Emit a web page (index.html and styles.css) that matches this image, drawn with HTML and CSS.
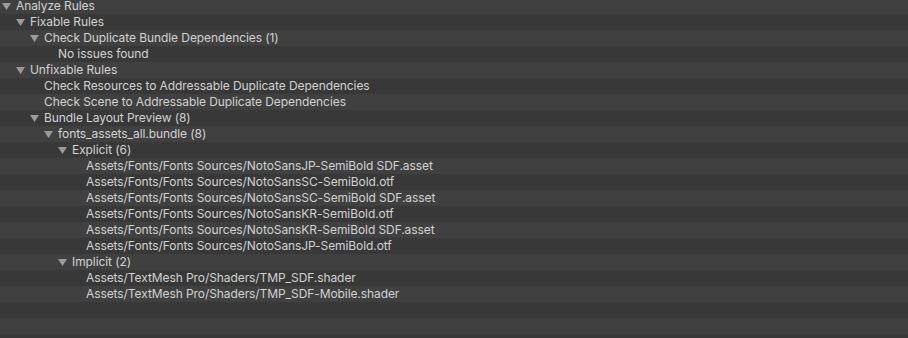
FILE: index.html
```html
<!DOCTYPE html>
<html>
<head>
    <title>Analyze Rules</title>
    <link rel="stylesheet" href="styles.css">
</head>
<body>
    <div class="tree">
        <div class="tree__row tree__row--first depth-0"><span class="tree__arrow"></span>Analyze Rules</div>
        <div class="tree__row depth-1"><span class="tree__arrow"></span>Fixable Rules</div>
        <div class="tree__row depth-2"><span class="tree__arrow"></span>Check Duplicate Bundle Dependencies (1)</div>
        <div class="tree__row depth-3">No issues found</div>
        <div class="tree__row depth-1"><span class="tree__arrow"></span>Unfixable Rules</div>
        <div class="tree__row depth-2">Check Resources to Addressable Duplicate Dependencies</div>
        <div class="tree__row depth-2">Check Scene to Addressable Duplicate Dependencies</div>
        <div class="tree__row depth-2"><span class="tree__arrow"></span>Bundle Layout Preview (8)</div>
        <div class="tree__row depth-3"><span class="tree__arrow"></span>fonts_assets_all.bundle (8)</div>
        <div class="tree__row depth-4"><span class="tree__arrow"></span>Explicit (6)</div>
        <div class="tree__row depth-5">Assets/Fonts/Fonts Sources/NotoSansJP-SemiBold SDF.asset</div>
        <div class="tree__row depth-5">Assets/Fonts/Fonts Sources/NotoSansSC-SemiBold.otf</div>
        <div class="tree__row depth-5">Assets/Fonts/Fonts Sources/NotoSansSC-SemiBold SDF.asset</div>
        <div class="tree__row depth-5">Assets/Fonts/Fonts Sources/NotoSansKR-SemiBold.otf</div>
        <div class="tree__row depth-5">Assets/Fonts/Fonts Sources/NotoSansKR-SemiBold SDF.asset</div>
        <div class="tree__row depth-5">Assets/Fonts/Fonts Sources/NotoSansJP-SemiBold.otf</div>
        <div class="tree__row depth-4"><span class="tree__arrow"></span>Implicit (2)</div>
        <div class="tree__row depth-5">Assets/TextMesh Pro/Shaders/TMP_SDF.shader</div>
        <div class="tree__row depth-5">Assets/TextMesh Pro/Shaders/TMP_SDF-Mobile.shader</div>
        <div class="tree__row"></div>
        <div class="tree__row"></div>
        <div class="tree__row"></div>
    </div>
</body>
</html>
```
FILE: styles.css
```css
* {
    margin: 0;
    padding: 0;
    box-sizing: border-box;
}

body {
    font-family: Inter, "Noto Sans", sans-serif;
    font-size: 12px;
    letter-spacing: -0.08px;
    background: #383838;
    color: #d2d2d2;
    height: 100vh;
    overflow: hidden;
}

.tree {
    display: flex;
    flex-direction: column;
}

.tree__row {
    height: 16px;
    line-height: 16px;
    white-space: nowrap;
    display: flex;
    align-items: center;
    background: #383838;
}

.tree__row:nth-child(odd) {
    background: #404040;
}

/* first row is scrolled up by two pixels */
.tree__row--first {
    height: 14px;
    line-height: 14px;
    padding-bottom: 2px;
}

.tree__arrow {
    flex-shrink: 0;
    width: 9px;
    height: 7px;
    margin-left: -14px;
    margin-right: 5px;
    margin-top: 1px;
    background: #9a9a9a;
    clip-path: polygon(0 0, 100% 0, 50% 100%);
}

.depth-0 { padding-left: 16px; }
.depth-1 { padding-left: 30px; }
.depth-2 { padding-left: 44px; }
.depth-3 { padding-left: 58px; }
.depth-4 { padding-left: 72px; }
.depth-5 { padding-left: 86px; }
```
